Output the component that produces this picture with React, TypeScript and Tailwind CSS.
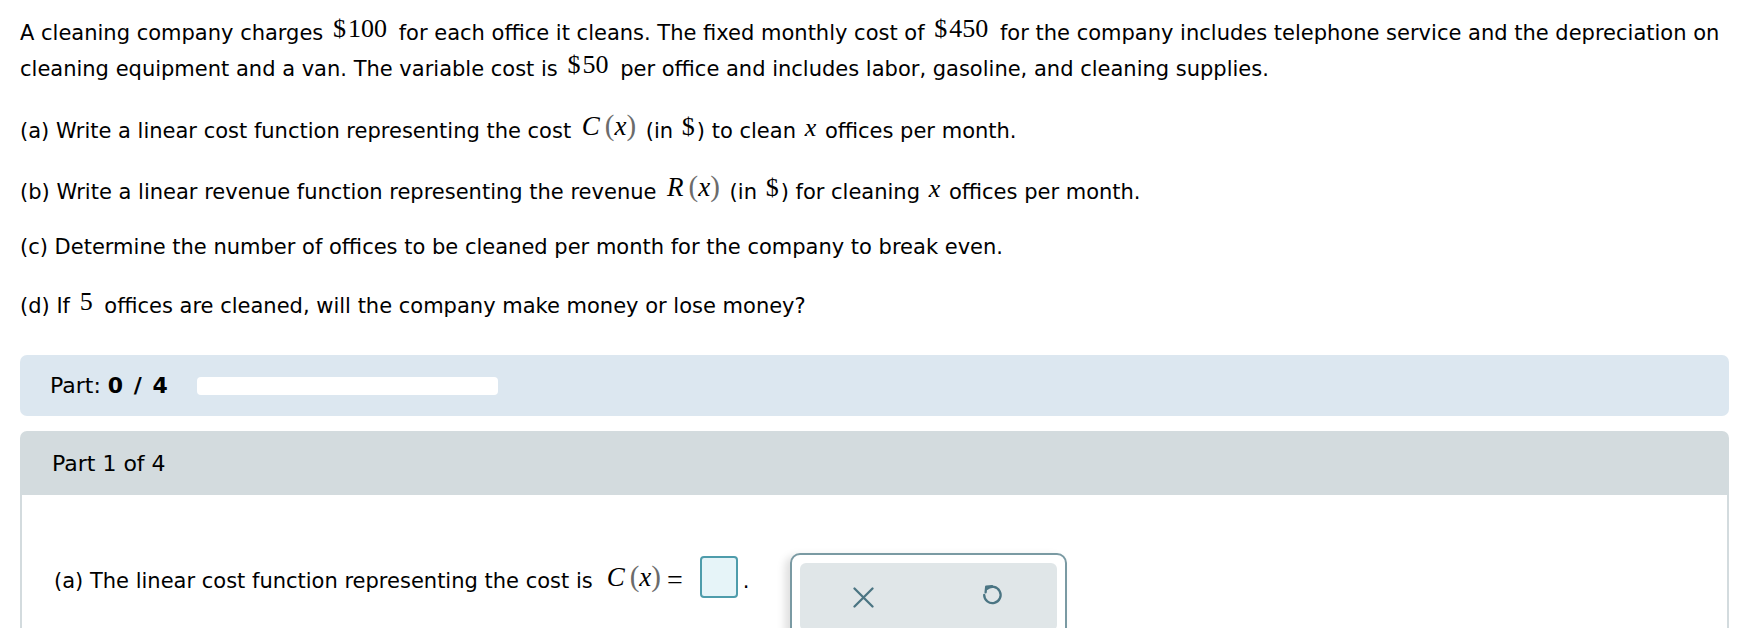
import React from "react";

function Num({ children, wide = true }: { children: React.ReactNode; wide?: boolean }) {
  return (
    <span
      className={
        wide
          ? "font-['Liberation_Serif','Times_New_Roman',serif] text-[26px] leading-none align-[3px] whitespace-nowrap ml-[3px] mr-[5px]"
          : "font-['Liberation_Serif','Times_New_Roman',serif] text-[26px] leading-none align-[3px] whitespace-nowrap mx-[2px]"
      }
    >
      {children}
    </span>
  );
}

function Dollar({ v }: { v: string }) {
  return (
    <Num>
      $<span className="ml-[2px]">{v}</span>
    </Num>
  );
}

function X() {
  return (
    <span className="font-['Liberation_Serif','Times_New_Roman',serif] italic text-[26px] leading-none align-[2px] mx-[2px]">
      x
    </span>
  );
}

function Fn({ name }: { name: string }) {
  return (
    <span className="font-['Liberation_Serif','Times_New_Roman',serif] text-[27px] leading-none align-[3px] whitespace-nowrap ml-[4px] mr-[3px]">
      <i>{name}</i>
      <span className="text-[#6b6b6b] text-[29px] ml-[5px]">(</span>
      <i>x</i>
      <span className="text-[#6b6b6b] text-[29px]">)</span>
    </span>
  );
}

function CloseIcon() {
  return (
    <svg width="21" height="21" viewBox="0 0 21 21" fill="none">
      <path d="M1.5 1.5L19.5 19.5M19.5 1.5L1.5 19.5" stroke="#4b7583" strokeWidth="2.3" strokeLinecap="round" />
    </svg>
  );
}

function UndoIcon() {
  return (
    <svg width="22" height="26" viewBox="0 0 22 26" fill="none">
      <path
        d="M6 4.8 A8.2 8.2 0 1 1 3.2 11"
        stroke="#4b7583"
        strokeWidth="2.3"
        strokeLinecap="round"
        fill="none"
      />
      <path
        d="M11 2.2L5.2 2.6L4.6 8.4"
        stroke="#4b7583"
        strokeWidth="2.3"
        strokeLinecap="round"
        strokeLinejoin="round"
        fill="none"
      />
    </svg>
  );
}

export default function App() {
  return (
    <div className="min-h-screen bg-white text-black font-['DejaVu_Sans',Verdana,sans-serif] text-[21px] pl-[20px] pr-[29px] pt-[15px]">
      <p className="leading-[36px] whitespace-nowrap">
        A cleaning company charges <Dollar v="100" /> for each office it cleans. The fixed monthly cost of{" "}
        <Dollar v="450" /> for the company includes telephone service and the depreciation on
        <br />
        cleaning equipment and a van. The variable cost is <Dollar v="50" /> per office and includes labor, gasoline,
        and cleaning supplies.
      </p>

      <p className="leading-[36px] mt-[24px]">
        (a) Write a linear cost function representing the cost <Fn name="C" /> (in <Num wide={false}>$</Num>) to clean{" "}
        <X /> offices per month.
      </p>
      <p className="leading-[36px] mt-[23px]">
        (b) Write a linear revenue function representing the revenue <Fn name="R" /> (in <Num wide={false}>$</Num>) for
        cleaning <X /> offices per month.
      </p>
      <p className="leading-[36px] mt-[19px]">
        (c) Determine the number of offices to be cleaned per month for the company to break even.
      </p>
      <p className="leading-[36px] mt-[23px]">
        (d) If <Num>5</Num> offices are cleaned, will the company make money or lose money?
      </p>

      <div className="mt-[31px] h-[61px] rounded-[7px] bg-[#dce7f0] flex items-center pl-[30px] text-[22px]">
        <span>
          Part: <span className="font-bold">0 <span className="mx-[3px]">/</span> 4</span>
        </span>
        <div className="ml-[29px] w-[301px] h-[18px] rounded-[4px] bg-white" />
      </div>

      <div className="mt-[15px] h-[64px] rounded-t-[7px] bg-[#d3dbde] flex items-center pl-[32px] text-[22px]">
        Part 1 of 4
      </div>
      <div className="border-x-2 border-[#d3dbde] h-[200px] pl-[32px] pt-[58px]">
        <div className="flex items-start">
          <div className="flex items-center h-[42px] mt-[3px]">
            <span className="pt-[9px]">(a) The linear cost function representing the cost is</span>
            <span className="ml-[10px] pt-[6px]">
              <Fn name="C" />
            </span>
            <span className="font-['Liberation_Serif','Times_New_Roman',serif] text-[28px] leading-none ml-[3px] pt-[6px]">
              =
            </span>
            <div className="ml-[17px] w-[38px] h-[42px] rounded-[4px] border-2 border-[#4e9cab] bg-[#e6f4f8]" />
            <span className="ml-[5px] pt-[9px]">.</span>
          </div>
          <div className="ml-[40px] w-[277px] border-2 border-[#7a9aa3] rounded-[10px] bg-white p-[8px] shadow-[-5px_3px_9px_rgba(0,0,0,0.13)]">
            <div className="h-[68px] rounded-[6px] bg-[#e0e6e8] grid grid-cols-2">
              <div className="flex items-center justify-center">
                <CloseIcon />
              </div>
              <div className="flex items-center justify-center">
                <UndoIcon />
              </div>
            </div>
          </div>
        </div>
      </div>
    </div>
  );
}
